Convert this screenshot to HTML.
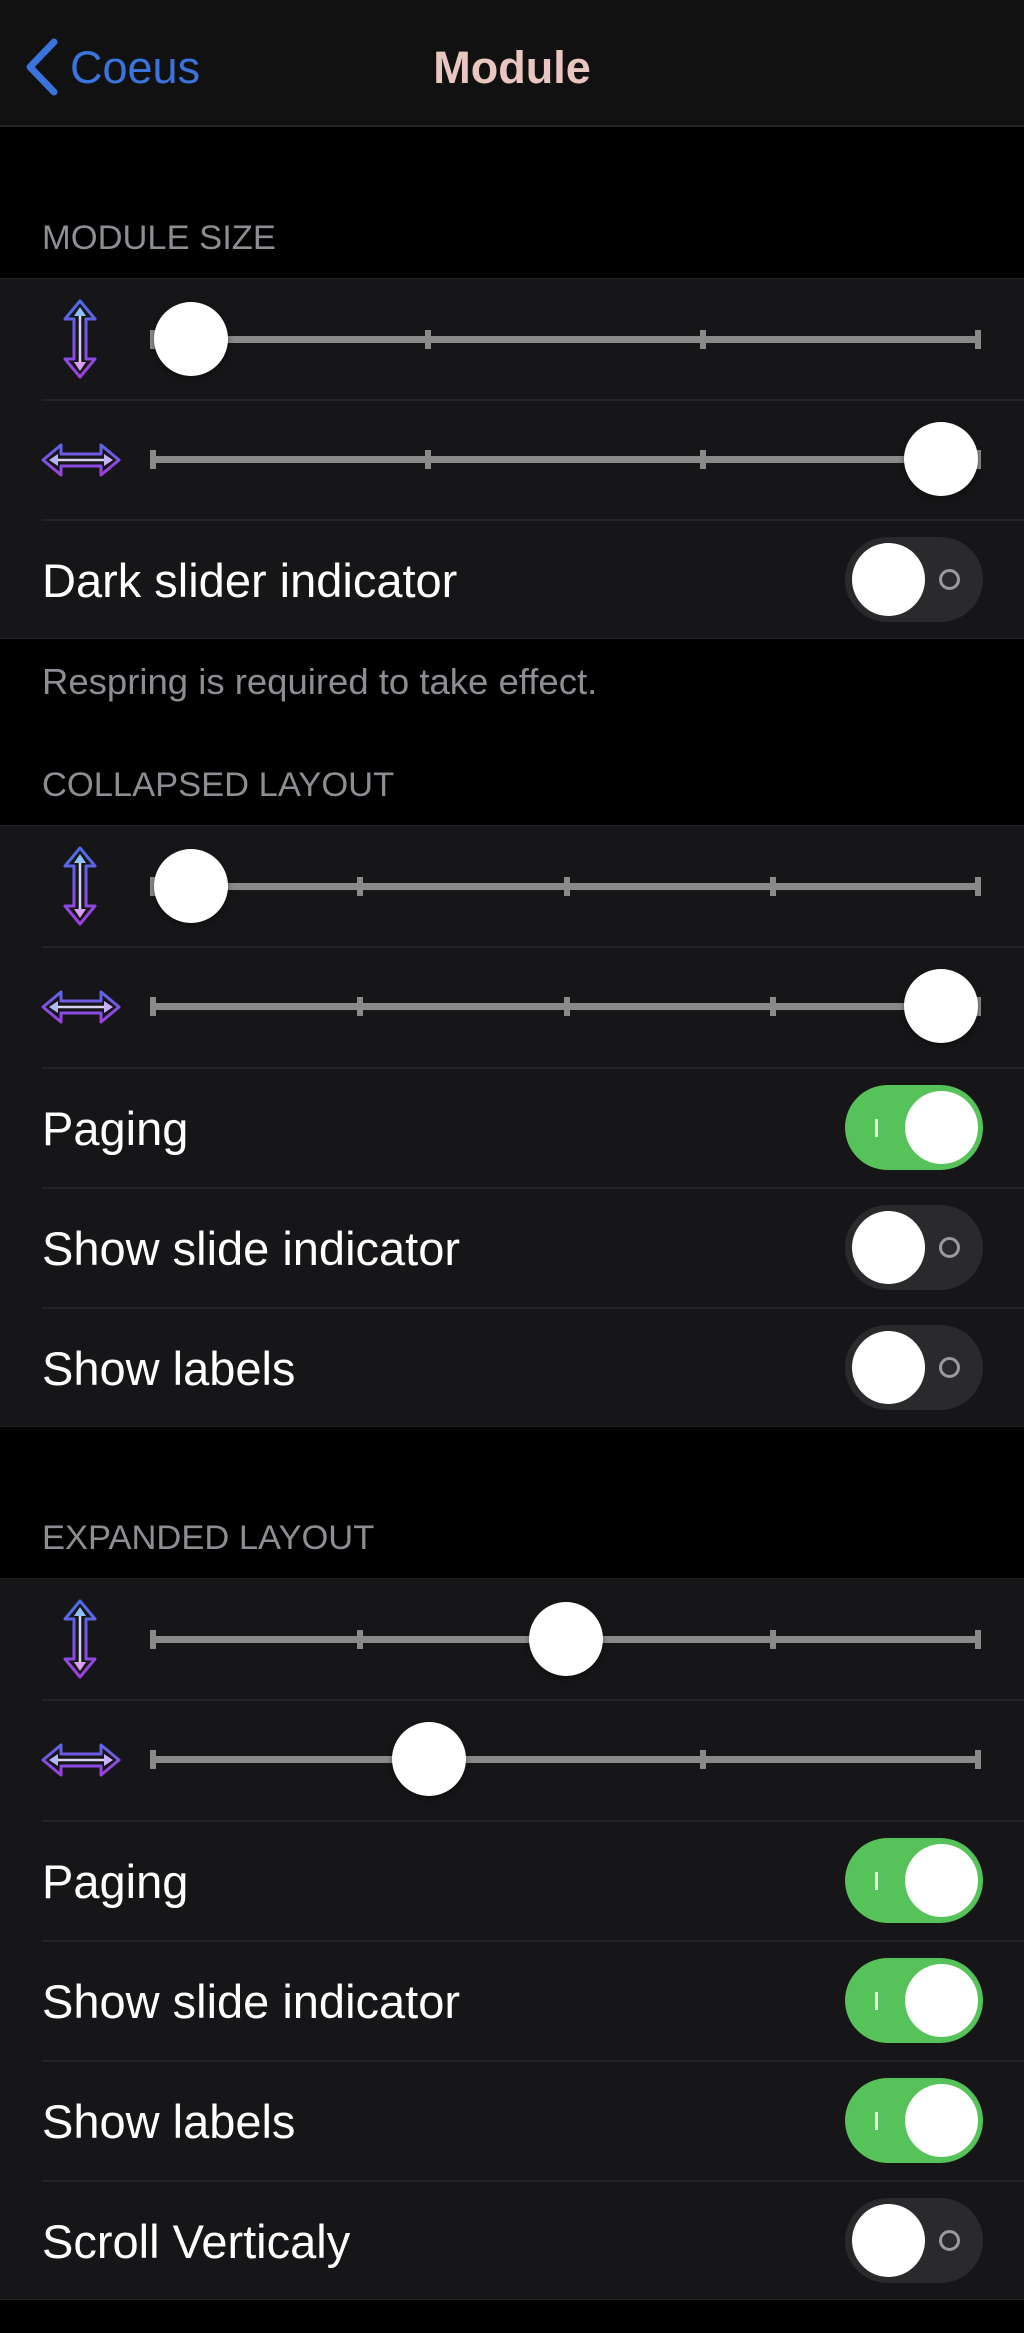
<!DOCTYPE html>
<html><head><meta charset="utf-8"><style>
*{margin:0;padding:0;box-sizing:border-box}
body{width:1024px;height:2333px;background:#000;position:relative;overflow:hidden;font-family:"Liberation Sans",sans-serif;color:#fff}
.nav{position:absolute;left:0;top:0;width:1024px;height:127px;background:#111112;border-bottom:2px solid #232325}
.back{position:absolute;left:70px;top:40px;font-size:45px;color:#3a73dc;line-height:56px}
.title{position:absolute;left:0;width:1024px;text-align:center;top:40px;font-size:45px;font-weight:bold;color:#e9c7c0;line-height:56px}
.hdr{position:absolute;left:42px;font-size:34.5px;color:#8d8d93;line-height:40px}
.foot{position:absolute;left:42px;font-size:36.5px;color:#8d8d93;line-height:40px}
.grp{position:absolute;left:0;width:1024px;background:#161618;border-top:1px solid #222224;border-bottom:1px solid #222224}
.row{position:absolute;left:0;width:1024px;height:120px}
.row.sep::before{content:"";position:absolute;left:42px;right:0;top:0;height:2px;background:#232326}
.lbl{position:absolute;left:42px;top:2px;line-height:120px;font-size:47px}
.track{position:absolute;left:153px;width:826px;top:57px;height:7px;background:#8a8a8a}
.tick{position:absolute;top:51px;width:6px;height:19px;background:#8a8a8a;margin-left:-3px}
.knob{position:absolute;top:23px;width:74px;height:74px;border-radius:50%;background:#fff;margin-left:-37px;box-shadow:0 2px 6px rgba(0,0,0,.4)}
.tg{position:absolute;left:845px;top:18px;width:138px;height:85px;border-radius:43px;background:#2a2a2d}
.tg .k{position:absolute;top:6px;left:7px;width:73px;height:73px;border-radius:50%;background:#fff}
.tg .o{position:absolute;left:94px;top:32px;width:21px;height:21px;border-radius:50%;border:3px solid #9a9a9e}
.tg.on{background:#55c35a}
.tg.on .k{left:60px}
.tg.on .i{position:absolute;left:30px;top:34px;width:3px;height:18px;background:#e8ffe8}
.ico{position:absolute}
</style></head><body>
<svg width="0" height="0" style="position:absolute"><defs>
<linearGradient id="gv" x1="0" y1="0" x2="0" y2="1"><stop offset="0" stop-color="#4a6fe8"/><stop offset="1" stop-color="#a03ee0"/></linearGradient>
<linearGradient id="gh" x1="0" y1="0" x2="0" y2="1"><stop offset="0" stop-color="#5a68e8"/><stop offset="1" stop-color="#a03ee0"/></linearGradient>
</defs></svg>

<div class="nav">
<svg style="position:absolute;left:22px;top:38px" width="38" height="58" viewBox="0 0 38 58"><path d="M32 4 L8 29 L32 54" fill="none" stroke="#3a73dc" stroke-width="7" stroke-linecap="round" stroke-linejoin="round"/></svg>
<div class="back">Coeus</div>
<div class="title">Module</div>
</div>

<div class="hdr" style="top:218px">MODULE SIZE</div>
<div class="grp" style="top:278px;height:361px">
 <div class="row" style="top:0">
  <svg class="ico" style="left:62px;top:20px" width="36" height="80" viewBox="0 0 36 80"><path d="M18 2 L33 20 L24 20 L24 60 L33 60 L18 78 L3 60 L12 60 L12 20 L3 20 Z" fill="none" stroke="url(#gv)" stroke-width="3" stroke-linejoin="round"/><line x1="18" y1="14" x2="18" y2="66" stroke="#d8d0f0" stroke-width="2.5"/><path d="M18 8 L24 17 L12 17Z" fill="#8ec0f8"/><path d="M18 72 L24 63 L12 63Z" fill="#d89ef0"/></svg>
  <div class="track"></div><div class="tick" style="left:153px"></div><div class="tick" style="left:428px"></div><div class="tick" style="left:703px"></div><div class="tick" style="left:978px"></div>
  <div class="knob" style="left:191px"></div>
 </div>
 <div class="row sep" style="top:120px">
  <svg class="ico" style="left:41px;top:43px" width="80" height="36" viewBox="0 0 80 36"><path d="M2 18 L20 3 L20 12 L60 12 L60 3 L78 18 L60 33 L60 24 L20 24 L20 33 Z" fill="none" stroke="url(#gh)" stroke-width="3" stroke-linejoin="round"/><line x1="14" y1="18" x2="66" y2="18" stroke="#d8d0f0" stroke-width="2.5"/><path d="M8 18 L17 12 L17 24Z" fill="#b0b8f8"/><path d="M72 18 L63 12 L63 24Z" fill="#c8b0f8"/></svg>
  <div class="track"></div><div class="tick" style="left:153px"></div><div class="tick" style="left:428px"></div><div class="tick" style="left:703px"></div><div class="tick" style="left:978px"></div>
  <div class="knob" style="left:941px"></div>
 </div>
 <div class="row sep" style="top:240px"><div class="lbl">Dark slider indicator</div><div class="tg"><div class="k"></div><div class="o"></div></div></div>
</div>
<div class="foot" style="top:662px">Respring is required to take effect.</div>

<div class="hdr" style="top:765px">COLLAPSED LAYOUT</div>
<div class="grp" style="top:825px;height:602px">
 <div class="row" style="top:0">
  <svg class="ico" style="left:62px;top:20px" width="36" height="80" viewBox="0 0 36 80"><path d="M18 2 L33 20 L24 20 L24 60 L33 60 L18 78 L3 60 L12 60 L12 20 L3 20 Z" fill="none" stroke="url(#gv)" stroke-width="3" stroke-linejoin="round"/><line x1="18" y1="14" x2="18" y2="66" stroke="#d8d0f0" stroke-width="2.5"/><path d="M18 8 L24 17 L12 17Z" fill="#8ec0f8"/><path d="M18 72 L24 63 L12 63Z" fill="#d89ef0"/></svg>
  <div class="track"></div><div class="tick" style="left:153px"></div><div class="tick" style="left:360px"></div><div class="tick" style="left:567px"></div><div class="tick" style="left:773px"></div><div class="tick" style="left:978px"></div>
  <div class="knob" style="left:191px"></div>
 </div>
 <div class="row sep" style="top:120px">
  <svg class="ico" style="left:41px;top:43px" width="80" height="36" viewBox="0 0 80 36"><path d="M2 18 L20 3 L20 12 L60 12 L60 3 L78 18 L60 33 L60 24 L20 24 L20 33 Z" fill="none" stroke="url(#gh)" stroke-width="3" stroke-linejoin="round"/><line x1="14" y1="18" x2="66" y2="18" stroke="#d8d0f0" stroke-width="2.5"/><path d="M8 18 L17 12 L17 24Z" fill="#b0b8f8"/><path d="M72 18 L63 12 L63 24Z" fill="#c8b0f8"/></svg>
  <div class="track"></div><div class="tick" style="left:153px"></div><div class="tick" style="left:360px"></div><div class="tick" style="left:567px"></div><div class="tick" style="left:773px"></div><div class="tick" style="left:978px"></div>
  <div class="knob" style="left:941px"></div>
 </div>
 <div class="row sep" style="top:241px"><div class="lbl">Paging</div><div class="tg on"><div class="i"></div><div class="k"></div></div></div>
 <div class="row sep" style="top:361px"><div class="lbl">Show slide indicator</div><div class="tg"><div class="k"></div><div class="o"></div></div></div>
 <div class="row sep" style="top:481px"><div class="lbl">Show labels</div><div class="tg"><div class="k"></div><div class="o"></div></div></div>
</div>

<div class="hdr" style="top:1518px">EXPANDED LAYOUT</div>
<div class="grp" style="top:1578px;height:722px">
 <div class="row" style="top:0">
  <svg class="ico" style="left:62px;top:20px" width="36" height="80" viewBox="0 0 36 80"><path d="M18 2 L33 20 L24 20 L24 60 L33 60 L18 78 L3 60 L12 60 L12 20 L3 20 Z" fill="none" stroke="url(#gv)" stroke-width="3" stroke-linejoin="round"/><line x1="18" y1="14" x2="18" y2="66" stroke="#d8d0f0" stroke-width="2.5"/><path d="M18 8 L24 17 L12 17Z" fill="#8ec0f8"/><path d="M18 72 L24 63 L12 63Z" fill="#d89ef0"/></svg>
  <div class="track"></div><div class="tick" style="left:153px"></div><div class="tick" style="left:360px"></div><div class="tick" style="left:567px"></div><div class="tick" style="left:773px"></div><div class="tick" style="left:978px"></div>
  <div class="knob" style="left:566px"></div>
 </div>
 <div class="row sep" style="top:120px">
  <svg class="ico" style="left:41px;top:43px" width="80" height="36" viewBox="0 0 80 36"><path d="M2 18 L20 3 L20 12 L60 12 L60 3 L78 18 L60 33 L60 24 L20 24 L20 33 Z" fill="none" stroke="url(#gh)" stroke-width="3" stroke-linejoin="round"/><line x1="14" y1="18" x2="66" y2="18" stroke="#d8d0f0" stroke-width="2.5"/><path d="M8 18 L17 12 L17 24Z" fill="#b0b8f8"/><path d="M72 18 L63 12 L63 24Z" fill="#c8b0f8"/></svg>
  <div class="track"></div><div class="tick" style="left:153px"></div><div class="tick" style="left:428px"></div><div class="tick" style="left:703px"></div><div class="tick" style="left:978px"></div>
  <div class="knob" style="left:429px"></div>
 </div>
 <div class="row sep" style="top:241px"><div class="lbl">Paging</div><div class="tg on"><div class="i"></div><div class="k"></div></div></div>
 <div class="row sep" style="top:361px"><div class="lbl">Show slide indicator</div><div class="tg on"><div class="i"></div><div class="k"></div></div></div>
 <div class="row sep" style="top:481px"><div class="lbl">Show labels</div><div class="tg on"><div class="i"></div><div class="k"></div></div></div>
 <div class="row sep" style="top:601px"><div class="lbl">Scroll Verticaly</div><div class="tg"><div class="k"></div><div class="o"></div></div></div>
</div>
</body></html>
